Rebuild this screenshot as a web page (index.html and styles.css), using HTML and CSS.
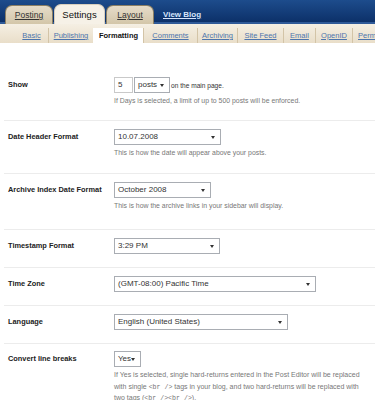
FILE: index.html
```html
<!DOCTYPE html>
<html lang="en">
<head>
<meta charset="utf-8">
<title>Settings - Formatting</title>
<link rel="stylesheet" href="styles.css">
</head>
<body>
<header class="topbar">
  <nav class="tabs">
    <a class="tab" href="#">Posting</a>
    <a class="tab active" href="#">Settings</a>
    <a class="tab" href="#">Layout</a>
    <a class="viewblog" href="#">View Blog</a>
  </nav>
</header>
<nav class="subnav">
  <a class="sub s-basic" href="#">Basic</a>
  <a class="sub s-publishing" href="#">Publishing</a>
  <a class="sub s-formatting active" href="#">Formatting</a>
  <a class="sub s-comments" href="#">Comments</a>
  <a class="sub s-archiving" href="#">Archiving</a>
  <a class="sub s-feed" href="#">Site Feed</a>
  <a class="sub s-email" href="#">Email</a>
  <a class="sub s-openid" href="#">OpenID</a>
  <a class="sub s-perm" href="#">Perm</a>
</nav>
<main class="settings">
  <div class="row first">
    <div class="label">Show</div>
    <div class="field">
      <div class="controls">
        <span class="input">5</span>
        <span class="select w-posts">posts<i class="arrow"></i></span>
        <span class="after">on the main page.</span>
      </div>
      <p class="hint">If Days is selected, a limit of up to 500 posts will be enforced.</p>
    </div>
  </div>
  <div class="row mid">
    <div class="label">Date Header Format</div>
    <div class="field">
      <span class="select w-date">10.07.2008<i class="arrow"></i></span>
      <p class="hint">This is how the date will appear above your posts.</p>
    </div>
  </div>
  <div class="row tall">
    <div class="label">Archive Index Date Format</div>
    <div class="field">
      <span class="select w-archive">October 2008<i class="arrow"></i></span>
      <p class="hint">This is how the archive links in your sidebar will display.</p>
    </div>
  </div>
  <div class="row">
    <div class="label">Timestamp Format</div>
    <div class="field">
      <span class="select w-time">3:29 PM<i class="arrow"></i></span>
    </div>
  </div>
  <div class="row">
    <div class="label">Time Zone</div>
    <div class="field">
      <span class="select w-zone">(GMT-08:00) Pacific Time<i class="arrow"></i></span>
    </div>
  </div>
  <div class="row">
    <div class="label">Language</div>
    <div class="field">
      <span class="select w-lang">English (United States)<i class="arrow"></i></span>
    </div>
  </div>
  <div class="row last">
    <div class="label">Convert line breaks</div>
    <div class="field">
      <span class="select w-yes">Yes<i class="arrow"></i></span>
      <p class="hint long">If Yes is selected, single hard-returns entered in the Post Editor will be replaced with single <code>&lt;br /&gt;</code> tags in your blog, and two hard-returns will be replaced with two tags (<code>&lt;br /&gt;&lt;br /&gt;</code>).</p>
    </div>
  </div>
</main>
</body>
</html>
```
FILE: styles.css
```css
html, body {
  margin: 0;
  padding: 0;
}
body {
  width: 375px;
  height: 400px;
  overflow: hidden;
  background: #fff;
  color: #222;
  font-family: "Liberation Sans", Arial, sans-serif;
}

/* top blue bar with tabs */
.topbar {
  height: 24px;
  background: linear-gradient(#1d4c8c, #0b2e66);
  box-shadow: inset 0 -2px 0 #2f5a98;
}
.tabs {
  display: flex;
  align-items: flex-end;
  height: 24px;
  padding-left: 5px;
}
.tab {
  display: block;
  box-sizing: border-box;
  width: 48px;
  height: 19px;
  margin-right: 1px;
  border: 1px solid #8d8064;
  border-bottom: none;
  border-radius: 7px 7px 0 0;
  background: linear-gradient(#e6dcc9, #d3c6a9);
  color: #333;
  font-size: 8.5px;
  line-height: 18px;
  text-align: center;
  text-decoration: underline;
}
.tab.active {
  width: 51px;
  height: 20px;
  border-color: #d9cfbd;
  background: #f6f1e7;
  color: #111;
  font-size: 9.5px;
  line-height: 20px;
  text-decoration: none;
}
.viewblog {
  display: block;
  align-self: flex-start;
  margin-left: 8px;
  padding-top: 10px;
  color: #d6e4fb;
  font-size: 8px;
  font-weight: bold;
  text-decoration: underline;
}

/* sub navigation */
.subnav {
  display: flex;
  align-items: flex-end;
  height: 19px;
  padding-left: 15px;
  background: linear-gradient(#f5efe3, #e9dec9);
  overflow: hidden;
}
.sub {
  display: block;
  flex-shrink: 0;
  box-sizing: border-box;
  height: 15px;
  border-left: 1px solid #d3c4a7;
  color: #4d75ad;
  font-size: 7.5px;
  line-height: 15px;
  text-align: center;
  white-space: nowrap;
  text-decoration: underline;
}
.sub.s-basic { width: 33px; border-left: none; }
.s-publishing { width: 45px; }
.s-formatting { width: 50px; }
.s-comments { width: 54px; }
.s-archiving { width: 40px; }
.s-feed { width: 46px; }
.s-email { width: 32px; }
.s-openid { width: 37px; }
.s-perm { width: 40px; text-align: left; padding-left: 5px; }
.sub.active {
  background: #fff;
  color: #111;
  font-weight: bold;
  text-decoration: none;
  border-left-color: #fff;
}

/* settings rows */
.settings {
  padding-left: 4px;
}
.row {
  display: grid;
  grid-template-columns: 106px 1fr;
  padding: 8px 0 13px 4px;
  border-top: 1px solid #ececec;
}
.row.first {
  padding-top: 34px;
  border-top: none;
}
.row.mid {
  padding-bottom: 14px;
}
.row.tall {
  padding-bottom: 17px;
}
.row.last {
  padding-top: 7px;
}
.label {
  padding-top: 1px;
  font-size: 7.4px;
  font-weight: bold;
  color: #222;
  line-height: 14px;
  white-space: nowrap;
}
.field {
  min-width: 0;
}
.controls {
  display: flex;
  align-items: center;
}
.input {
  display: block;
  box-sizing: border-box;
  width: 19px;
  height: 16px;
  border: 1px solid #c9c9c9;
  padding-left: 3px;
  font-size: 8px;
  line-height: 14px;
  color: #333;
}
.select {
  position: relative;
  display: block;
  box-sizing: border-box;
  height: 16px;
  border: 1px solid #a9adb3;
  background: #fff;
  padding-left: 3px;
  font-size: 8px;
  line-height: 14px;
  color: #333;
  white-space: nowrap;
}
.arrow {
  position: absolute;
  right: 5px;
  top: 6px;
  width: 0;
  height: 0;
  border-left: 2px solid transparent;
  border-right: 2px solid transparent;
  border-top: 3px solid #333;
}
.w-posts { width: 36px; margin-left: 1px; }
.w-date { width: 107px; }
.w-archive { width: 97px; }
.w-time { width: 106px; }
.w-zone { width: 202px; }
.w-lang { width: 174px; }
.w-yes { width: 27px; }
.after {
  margin-left: 1px;
  font-size: 6.6px;
  color: #333;
}
.hint {
  margin: 2px 0 0;
  font-size: 6.9px;
  line-height: 12px;
  color: #777;
}
.hint.long {
  width: 250px;
  font-size: 7px;
  line-height: 11.5px;
}
.hint code {
  font-family: "Liberation Mono", monospace;
  font-size: 6.6px;
  line-height: 1;
}
```
